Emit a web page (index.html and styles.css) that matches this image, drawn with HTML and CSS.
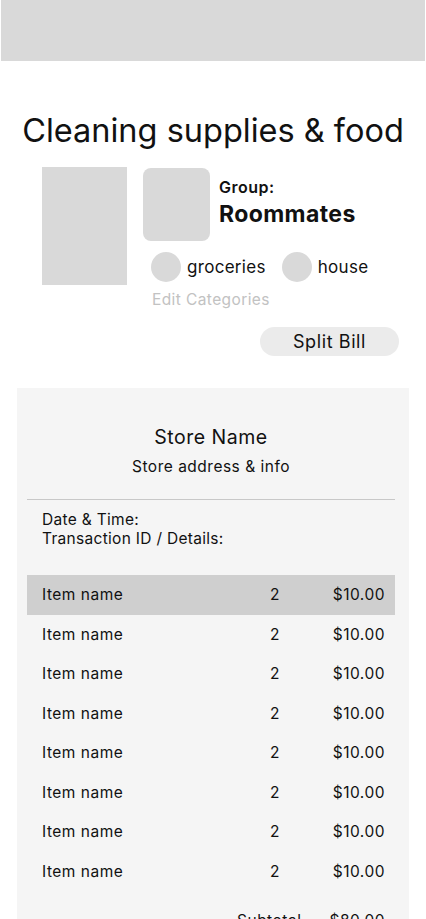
FILE: index.html
```html
<!DOCTYPE html>
<html>
<head>
<meta charset="utf-8">
<link rel="stylesheet" href="styles.css">
</head>
<body>
<div class="topbar"></div>
<h1 class="title">Cleaning supplies &amp; food</h1>
<section class="header">
  <div class="photo"></div>
  <div class="info">
    <div class="group-row">
      <div class="avatar"></div>
      <div class="group-text">
        <div class="group-label">Group:</div>
        <div class="group-name">Roommates</div>
      </div>
    </div>
    <div class="chips">
      <div class="chip"><span class="dot"></span><span>groceries</span></div>
      <div class="chip"><span class="dot"></span><span>house</span></div>
    </div>
    <div class="edit">Edit Categories</div>
  </div>
</section>
<div class="actions"><button class="split">Split Bill</button></div>
<section class="receipt">
  <div class="store">
    <div class="store-name">Store Name</div>
    <div class="store-info">Store address &amp; info</div>
  </div>
  <div class="divider"></div>
  <div class="meta">
    <div>Date &amp; Time:</div>
    <div>Transaction ID / Details:</div>
  </div>
  <div class="items">
    <div class="item active"><span>Item name</span><span class="qty">2</span><span class="price">$10.00</span></div>
    <div class="item"><span>Item name</span><span class="qty">2</span><span class="price">$10.00</span></div>
    <div class="item"><span>Item name</span><span class="qty">2</span><span class="price">$10.00</span></div>
    <div class="item"><span>Item name</span><span class="qty">2</span><span class="price">$10.00</span></div>
    <div class="item"><span>Item name</span><span class="qty">2</span><span class="price">$10.00</span></div>
    <div class="item"><span>Item name</span><span class="qty">2</span><span class="price">$10.00</span></div>
    <div class="item"><span>Item name</span><span class="qty">2</span><span class="price">$10.00</span></div>
    <div class="item"><span>Item name</span><span class="qty">2</span><span class="price">$10.00</span></div>
  </div>
  <div class="subtotal"><span>Subtotal</span><span>$80.00</span></div>
</section>
</body>
</html>
```
FILE: styles.css
```css
html, body {
  margin: 0;
  padding: 0;
  background: #ffffff;
}
body {
  font-family: Inter, "Open Sans", sans-serif;
  color: #111111;
  overflow: hidden;
}
.topbar {
  height: 61px;
  margin: 0 1px;
  background: #d9d9d9;
}
.title {
  margin: 50px 0 0;
  font-size: 32.5px;
  line-height: 40px;
  font-weight: 400;
  text-align: center;
  letter-spacing: 0;
}
.header {
  display: flex;
  gap: 16px;
  padding-left: 42px;
  margin-top: 16px;
}
.photo {
  width: 85px;
  height: 118px;
  background: #d9d9d9;
}
.info {
  display: flex;
  flex-direction: column;
  padding-top: 1px;
}
.group-row {
  display: flex;
  gap: 9px;
}
.avatar {
  width: 67px;
  height: 73px;
  border-radius: 8px;
  background: #d9d9d9;
}
.group-text {
  padding-top: 10px;
}
.group-label {
  font-size: 16px;
  line-height: 18px;
  font-weight: 600;
  letter-spacing: 0.5px;
}
.group-name {
  font-size: 23px;
  line-height: 28px;
  font-weight: 700;
  margin-top: 4px;
  letter-spacing: 0.4px;
}
.chips {
  display: flex;
  gap: 16px;
  padding-left: 8px;
  margin-top: 11px;
}
.chip {
  display: flex;
  align-items: center;
  gap: 6px;
  font-size: 17px;
  letter-spacing: 0.3px;
}
.dot {
  width: 30px;
  height: 30px;
  border-radius: 50%;
  background: #d9d9d9;
}
.edit {
  padding-left: 9px;
  margin-top: 9px;
  font-size: 15.5px;
  line-height: 18px;
  letter-spacing: 0.4px;
  color: #c2c2c2;
}
.actions {
  display: flex;
  justify-content: flex-end;
  padding-right: 27px;
  margin-top: 18px;
}
.split {
  width: 139px;
  height: 29px;
  border: none;
  border-radius: 15px;
  background: #ebebeb;
  font-family: inherit;
  font-size: 18px;
  letter-spacing: 0.6px;
  color: #111111;
  padding: 0;
}
.receipt {
  margin: 32px 17px 0;
  padding: 0 14px 0 10px;
  background: #f5f5f5;
  height: 600px;
}
.store {
  text-align: center;
  padding-top: 37px;
}
.store-name {
  font-size: 19.5px;
  line-height: 24px;
  letter-spacing: 0.5px;
}
.store-info {
  font-size: 15.5px;
  line-height: 20px;
  margin-top: 8px;
  letter-spacing: 0.5px;
}
.divider {
  height: 1px;
  background: #c8c8c8;
  margin-top: 22px;
}
.meta {
  padding: 10px 15px 0;
  font-size: 15.5px;
  line-height: 19px;
  letter-spacing: 0.3px;
}
.items {
  margin-top: 27px;
}
.item {
  display: grid;
  grid-template-columns: 1fr 40px 90px;
  align-items: center;
  height: 39.5px;
  padding: 0 10px 0 15px;
  font-size: 15.5px;
  letter-spacing: 0.5px;
}
.item.active {
  background: #cfcfcf;
}
.qty {
  text-align: center;
}
.price {
  text-align: right;
}
.subtotal {
  display: flex;
  justify-content: flex-end;
  gap: 28px;
  padding: 20px 10px 0 0;
  font-size: 15.5px;
  letter-spacing: 0.5px;
}
```
